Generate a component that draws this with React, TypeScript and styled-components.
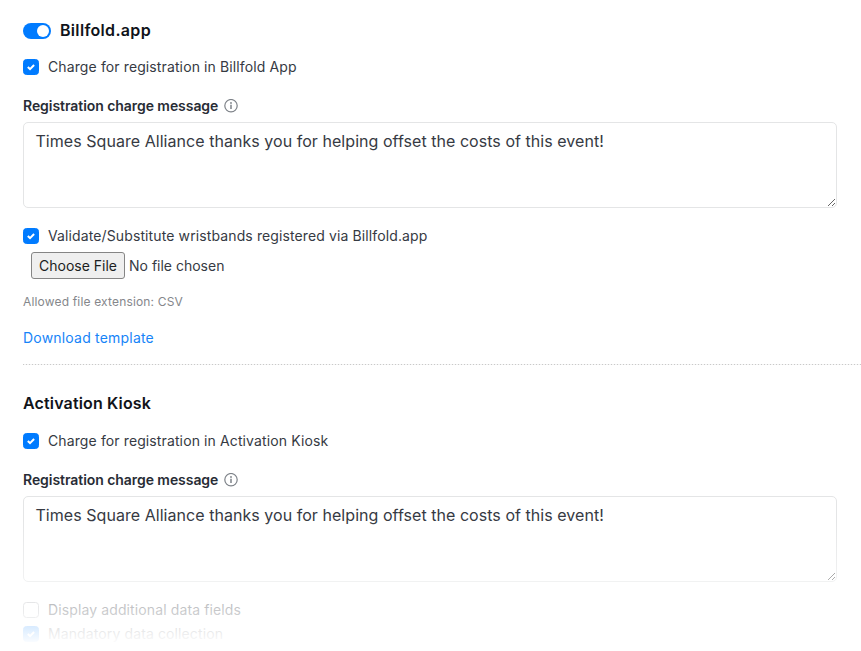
import React from 'react';
import styled, { createGlobalStyle } from 'styled-components';

const GlobalStyle = createGlobalStyle`
  * { box-sizing: border-box; }
  html, body { margin: 0; background: #fff; overflow: hidden; }
  body { font-family: Inter, "Liberation Sans", sans-serif; color: #363a43; }
`;

const Page = styled.main`
  position: relative;
  display: flex;
  flex-direction: column;
  height: 651px;
  overflow: hidden;
  padding: 19px 0 0 23px;
`;

const Header = styled.header`
  display: flex;
  align-items: center;
  gap: 9px;
  height: 24px;
`;

const Toggle = styled.span`
  display: flex;
  justify-content: flex-end;
  align-items: center;
  width: 28px;
  height: 16px;
  padding: 2px;
  border-radius: 8px;
  background: #007bff;
`;

const Knob = styled.span`
  width: 12px;
  height: 12px;
  border-radius: 50%;
  background: #fff;
`;

const Title = styled.h2<{ $spacing: number }>`
  margin: 0;
  padding-bottom: 2px;
  font-size: 16px;
  line-height: 22px;
  font-weight: 600;
  letter-spacing: ${(p) => p.$spacing}px;
  color: #10131a;
`;

const CheckRow = styled.label<{ $top: number }>`
  display: flex;
  align-items: center;
  gap: 9px;
  height: 24px;
  margin-top: ${(p) => p.$top}px;
  font-size: 14px;
  line-height: 24px;
  letter-spacing: 0.115px;
  white-space: nowrap;
`;

const Box = styled.span<{ $checked: boolean }>`
  display: flex;
  align-items: center;
  justify-content: center;
  width: 16px;
  height: 16px;
  border-radius: 3.5px;
  border: 1px solid ${(p) => (p.$checked ? '#007bff' : '#b4b6ba')};
  background: ${(p) => (p.$checked ? '#007bff' : '#fff')};
`;

const FieldLabel = styled.div`
  display: flex;
  align-items: center;
  gap: 6px;
  height: 20px;
  margin-top: 17px;
  font-size: 14px;
  line-height: 20px;
  font-weight: 600;
  letter-spacing: -0.06px;
  color: #282c35;
`;

const Message = styled.textarea`
  display: block;
  flex: none;
  width: 814px;
  height: 86px;
  margin: 6px 0 0;
  padding: 6px 11.5px;
  border: 1px solid #e4e5e6;
  border-radius: 5px;
  background: #fff;
  color: #363a43;
  font: 400 16px/24px Inter, "Liberation Sans", sans-serif;
  letter-spacing: 0.045px;
  resize: vertical;
  outline: none;
`;

const FilePicker = styled.div`
  display: flex;
  align-items: center;
  gap: 4px;
  height: 27px;
  margin: 4px 0 0 8px;
  font-size: 14px;
`;

const FileButton = styled.button`
  width: 94px;
  height: 27px;
  padding: 0;
  border: 1px solid #858585;
  border-radius: 3px;
  background: #efefef;
  color: #1c1e22;
  font: 400 14px/20px Inter, "Liberation Sans", sans-serif;
`;

const Hint = styled.p`
  margin: 14px 0 0;
  font-size: 12px;
  line-height: 18px;
  letter-spacing: 0.165px;
  color: #85878b;
`;

const TemplateLink = styled.a`
  align-self: flex-start;
  margin-top: 17px;
  font-size: 14px;
  line-height: 20px;
  letter-spacing: 0.2px;
  color: #1684f8;
  text-decoration: none;
`;

const Divider = styled.hr`
  width: 100%;
  height: 1px;
  margin: 16px 0 27px;
  border: 0;
  background: repeating-linear-gradient(90deg, #c9c9c9 0 1px, #f4f4f4 1px 3px);
`;

const Fade = styled.div`
  position: absolute;
  left: 0;
  right: 0;
  bottom: 0;
  height: 131px;
  background: linear-gradient(rgba(255, 255, 255, 0) 0, #fff 125px);
  pointer-events: none;
`;

function Check({ checked = true, top, children }: { checked?: boolean; top: number; children: React.ReactNode }) {
  return (
    <CheckRow $top={top}>
      <Box $checked={checked}>
        {checked && (
          <svg width="10" height="10" viewBox="0 0 10 10" fill="none">
            <path d="M1.8 5.1 4 7.1 8.1 3" stroke="#fff" strokeWidth="2" />
          </svg>
        )}
      </Box>
      {children}
    </CheckRow>
  );
}

function InfoIcon() {
  return (
    <svg width="14" height="14" viewBox="0 0 14 14" fill="none">
      <circle cx="7" cy="6.7" r="6.2" stroke="#7d8288" strokeWidth="1.2" />
      <circle cx="7" cy="4" r="0.9" fill="#7d8288" />
      <path d="M7 5.8v4.1" stroke="#7d8288" strokeWidth="1.5" />
    </svg>
  );
}

function ChargeMessage() {
  return (
    <>
      <FieldLabel>
        Registration charge message
        <InfoIcon />
      </FieldLabel>
      <Message
        spellCheck={false}
        defaultValue="Times Square Alliance thanks you for helping offset the costs of this event!"
      />
    </>
  );
}

export default function App() {
  return (
    <>
      <GlobalStyle />
      <Page>
        <Header>
          <Toggle>
            <Knob />
          </Toggle>
          <Title $spacing={0.32}>Billfold.app</Title>
        </Header>
        <Check top={12}>Charge for registration in Billfold App</Check>
        <ChargeMessage />
        <Check top={16}>Validate/Substitute wristbands registered via Billfold.app</Check>
        <FilePicker>
          <FileButton type="button">Choose File</FileButton>
          No file chosen
        </FilePicker>
        <Hint>Allowed file extension: CSV</Hint>
        <TemplateLink href="#">Download template</TemplateLink>
        <Divider />
        <Title $spacing={0.15}>Activation Kiosk</Title>
        <Check top={13}>Charge for registration in Activation Kiosk</Check>
        <ChargeMessage />
        <Check top={16} checked={false}>
          Display additional data fields
        </Check>
        <Check top={0}>Mandatory data collection</Check>
        <Fade />
      </Page>
    </>
  );
}
